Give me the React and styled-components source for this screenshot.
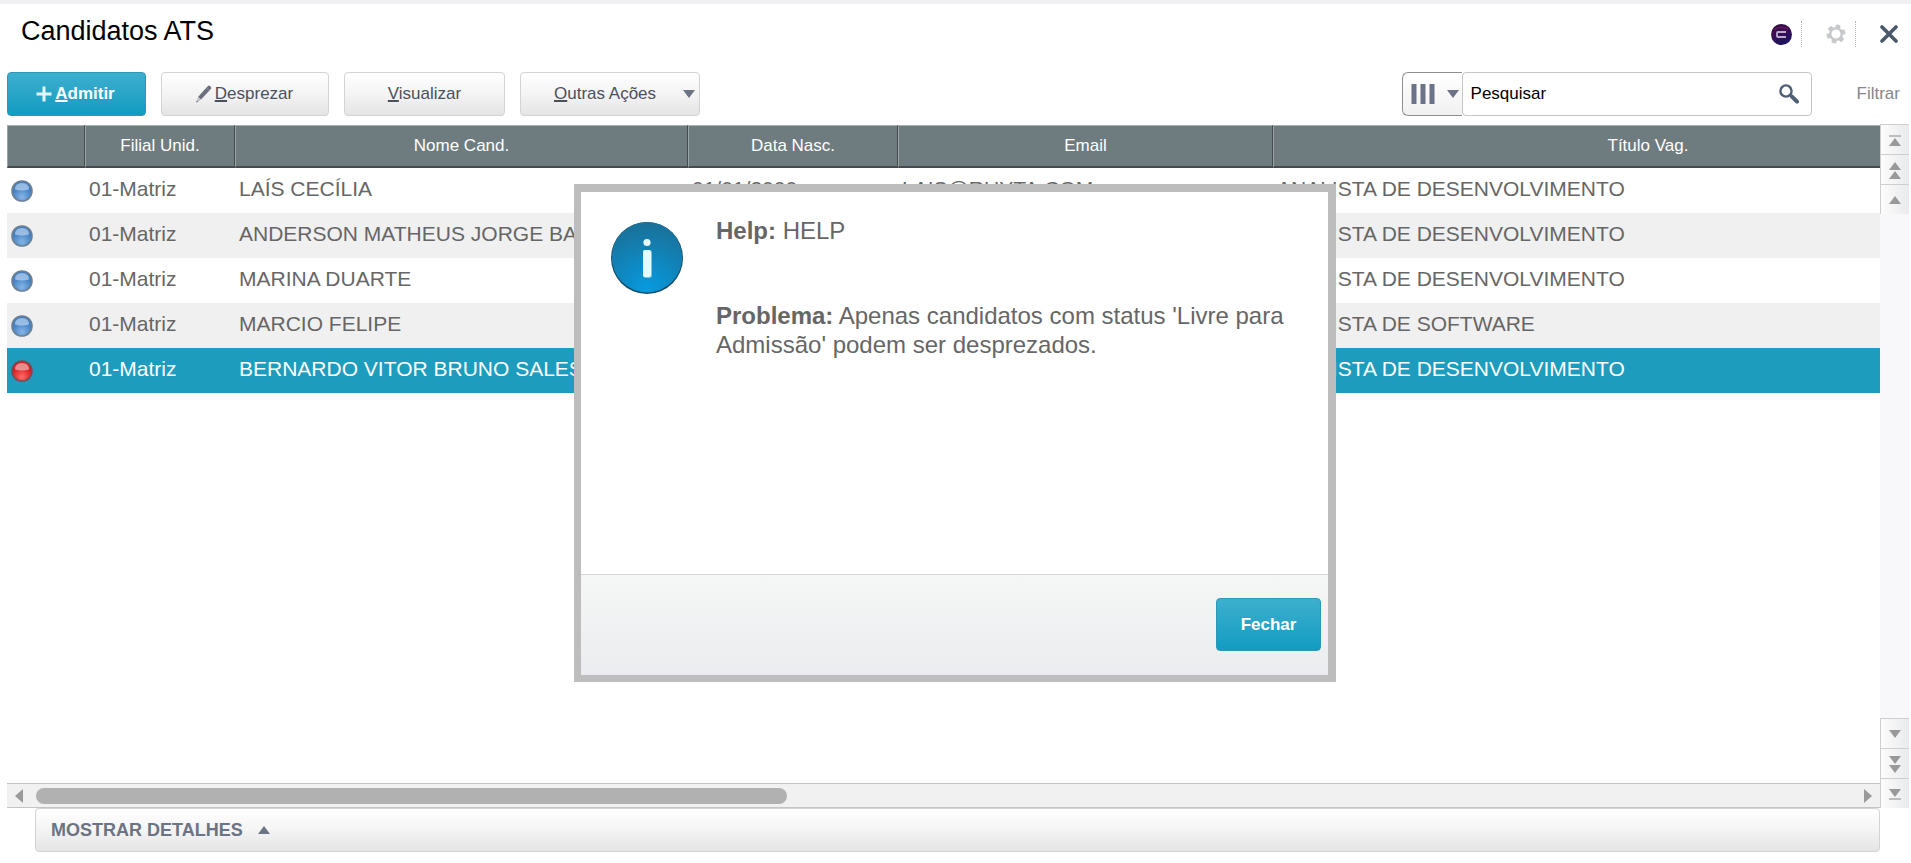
import { useState } from 'react';
import styled, { createGlobalStyle, css } from 'styled-components';

const columns = [
  { id: 'status', title: '', width: 78 },
  { id: 'filial', title: 'Filial Unid.', width: 150 },
  { id: 'nome', title: 'Nome Cand.', width: 453 },
  { id: 'nasc', title: 'Data Nasc.', width: 210 },
  { id: 'email', title: 'Email', width: 375 },
  { id: 'vaga', title: 'Título Vag.', width: 750 },
];

const candidates = [
  {
    id: 1,
    status: 'blue',
    filial: '01-Matriz',
    nome: 'LAÍS CECÍLIA',
    nasc: '01/01/2000',
    email: 'LAIS@RUYTA.COM',
    vaga: 'ANALISTA DE DESENVOLVIMENTO',
  },
  { id: 2, status: 'blue', filial: '01-Matriz', nome: 'ANDERSON MATHEUS JORGE BA', vaga: 'ANALISTA DE DESENVOLVIMENTO' },
  { id: 3, status: 'blue', filial: '01-Matriz', nome: 'MARINA DUARTE', vaga: 'ANALISTA DE DESENVOLVIMENTO' },
  { id: 4, status: 'blue', filial: '01-Matriz', nome: 'MARCIO FELIPE', vaga: 'ANALISTA DE SOFTWARE' },
  { id: 5, status: 'red', filial: '01-Matriz', nome: 'BERNARDO VITOR BRUNO SALES', vaga: 'ANALISTA DE DESENVOLVIMENTO' },
];

const ledColors = {
  blue: { edge: '#6d7f90', base: '#3f7fc4', glow: '#86b4e4', shine: '#b4cfec' },
  red: { edge: '#7c4a55', base: '#d81c20', glow: '#ff6a66', shine: '#eeb0b0' },
};

const Led = ({ color }) => {
  const c = ledColors[color];
  return (
    <svg width='22' height='22' viewBox='0 0 22 22' aria-label={color} role='img'>
      <defs>
        <radialGradient id={`led-${color}`} cx='0.5' cy='0.8' r='0.7'>
          <stop offset='0' stopColor={c.glow} />
          <stop offset='0.75' stopColor={c.base} />
        </radialGradient>
      </defs>
      <circle cx='11' cy='11' r='10' fill={`url(#led-${color})`} stroke={c.edge} strokeWidth='1.6' />
      <path d='M4 9.5 Q4 3 11 3 Q18 3 18 9.5 Q11 11.5 4 9.5Z' fill={c.shine} opacity='0.75' />
    </svg>
  );
};

const Triangle = ({ dir = 'down', color = '#6b7384', width = 12, height = 8 }) => {
  const points = {
    down: `0,0 ${width},0 ${width / 2},${height}`,
    up: `0,${height} ${width},${height} ${width / 2},0`,
    left: `${width},0 ${width},${height} 0,${height / 2}`,
    right: `0,0 0,${height} ${width},${height / 2}`,
  };
  return (
    <svg width={width} height={height} aria-hidden='true'>
      <polygon points={points[dir]} fill={color} />
    </svg>
  );
};

const PlusIcon = () => (
  <svg width='16' height='16' viewBox='0 0 16 16' aria-hidden='true'>
    <path d='M8 0.5v15M0.5 8h15' stroke='#e4f8fc' strokeWidth='3' />
  </svg>
);

const PencilIcon = () => (
  <svg width='17' height='18' viewBox='0 0 17 18' aria-hidden='true'>
    <path d='M3 12L11.5 2.5L14.5 5.5L6 14.5Z' fill='#6b6f7e' />
    <path d='M11.5 2.5L13.5 0.6Q16 0.6 16.4 3.2L14.5 5.5Z' fill='#6b6f7e' />
    <path d='M3 12L6 14.5L1.5 17.5Z' fill='#b9bcc4' />
    <path d='M2 15.4L3.4 16.6L1 17.8Z' fill='#6b6f7e' />
  </svg>
);

const ColumnsIcon = () => (
  <svg width='24' height='20' viewBox='0 0 24 20' aria-hidden='true'>
    <path d='M3 0v20M12 0v20M21 0v20' stroke='#6b7388' strokeWidth='5' />
  </svg>
);

const SearchIcon = () => (
  <svg width='20' height='20' viewBox='0 0 20 20' aria-hidden='true'>
    <circle cx='7' cy='7' r='5.6' fill='none' stroke='#4d5d73' strokeWidth='2.4' />
    <path d='M11 11l2 2' stroke='#4d5d73' strokeWidth='2.4' />
    <path d='M13 12.6l5 5' stroke='#4d5d73' strokeWidth='4' strokeLinecap='round' />
  </svg>
);

const CarolIcon = () => (
  <svg width='21' height='21' viewBox='0 0 21 21' aria-hidden='true'>
    <defs>
      <linearGradient id='carol' x1='0' y1='0' x2='0.4' y2='1'>
        <stop offset='0' stopColor='#2a0a38' />
        <stop offset='0.45' stopColor='#3d0d52' />
        <stop offset='1' stopColor='#1d1462' />
      </linearGradient>
    </defs>
    <circle cx='10.5' cy='10.5' r='10.5' fill='url(#carol)' />
    <path d='M3 6Q9 1 17 5' fill='none' stroke='#64185c' strokeWidth='2' opacity='0.8' />
    <path d='M15 8H7Q6 8 6 9V12Q6 13 7 13H15' fill='none' stroke='#b9a9cc' strokeWidth='1.8' />
  </svg>
);

const GearIcon = () => (
  <svg width='20' height='20' viewBox='-10 -10 20 20' aria-hidden='true'>
    <g fill='#c6c8cb'>
      {[15, 75, 135, 195, 255, 315].map((deg) => (
        <rect key={deg} x='-2.4' y='-9.4' width='4.8' height='4.6' rx='1' transform={`rotate(${deg})`} />
      ))}
    </g>
    <circle r='5.8' fill='none' stroke='#c6c8cb' strokeWidth='2.4' />
  </svg>
);

const CloseIcon = () => (
  <svg width='18' height='18' viewBox='0 0 18 18' aria-hidden='true'>
    <path d='M2 2l14 14M16 2L2 16' stroke='#4a586c' strokeWidth='3.6' strokeLinecap='round' />
  </svg>
);

const InfoIcon = () => (
  <svg width='72' height='72' viewBox='0 0 72 72' aria-hidden='true'>
    <defs>
      <radialGradient id='info' cx='0.5' cy='0.95' r='0.9'>
        <stop offset='0' stopColor='#069be0' />
        <stop offset='0.5' stopColor='#0f86bd' />
        <stop offset='1' stopColor='#19729b' />
      </radialGradient>
    </defs>
    <circle cx='36' cy='36' r='36' fill='#124a66' />
    <circle cx='36' cy='35.2' r='35.2' fill='url(#info)' />
    <circle cx='36' cy='20.5' r='3.6' fill='#e4fbff' />
    <rect x='32' y='28' width='9' height='28' rx='3' fill='#7cc4e2' />
    <rect x='32' y='28' width='8' height='27' rx='2' fill='#e4fbff' />
  </svg>
);

const App = () => {
  const [selected, setSelected] = useState(5);
  const [open, setOpen] = useState(true);

  return (
    <Page>
      <GlobalStyle />
      <TitleBar>
        <Title>Candidatos ATS</Title>
        <TitleActions>
          <IconButton aria-label='Carol'>
            <CarolIcon />
          </IconButton>
          <Divider />
          <IconButton aria-label='Configurações' $wide>
            <GearIcon />
          </IconButton>
          <Divider />
          <IconButton aria-label='Sair' $wide>
            <CloseIcon />
          </IconButton>
        </TitleActions>
      </TitleBar>

      <Toolbar>
        <Button $primary $width={139}>
          <PlusIcon />
          <Label>
            <u>A</u>dmitir
          </Label>
        </Button>
        <Button $width={168}>
          <PencilIcon />
          <Label>
            <u>D</u>esprezar
          </Label>
        </Button>
        <Button $width={161}>
          <Label>
            <u>V</u>isualizar
          </Label>
        </Button>
        <MenuButton $width={180} aria-haspopup='menu'>
          <Label>
            <u>O</u>utras Ações
          </Label>
          <Triangle />
        </MenuButton>
        <SearchGroup>
          <ColumnPicker aria-label='Colunas' aria-haspopup='menu'>
            <ColumnsIcon />
            <Triangle />
          </ColumnPicker>
          <SearchBox>
            <SearchInput type='text' placeholder='Pesquisar' aria-label='Pesquisar' />
            <IconButton aria-label='Buscar'>
              <SearchIcon />
            </IconButton>
          </SearchBox>
        </SearchGroup>
        <FilterButton>Filtrar</FilterButton>
      </Toolbar>

      <Browse>
        <BrowseMain>
          <TableView>
            <Table>
              <colgroup>
                {columns.map((col) => (
                  <Col key={col.id} $width={col.width} />
                ))}
              </colgroup>
              <thead>
                <tr>
                  {columns.map((col) => (
                    <HeadCell key={col.id} scope='col'>
                      {col.title}
                    </HeadCell>
                  ))}
                </tr>
              </thead>
              <tbody>
                {candidates.map((item) => (
                  <Row key={item.id} $selected={item.id === selected} onClick={() => setSelected(item.id)}>
                    <StatusCell>
                      <Led color={item.status} />
                    </StatusCell>
                    <Cell>{item.filial}</Cell>
                    <Cell>{item.nome}</Cell>
                    <Cell>{item.nasc}</Cell>
                    <Cell>{item.email}</Cell>
                    <Cell>{item.vaga}</Cell>
                  </Row>
                ))}
              </tbody>
            </Table>
          </TableView>
          <HScroll>
            <ArrowButton aria-label='Rolar para a esquerda'>
              <Triangle dir='left' color='#9a9a9a' width={8} height={14} />
            </ArrowButton>
            <Track>
              <Thumb />
            </Track>
            <ArrowButton aria-label='Rolar para a direita'>
              <Triangle dir='right' color='#9a9a9a' width={8} height={14} />
            </ArrowButton>
          </HScroll>
        </BrowseMain>
        <VScroll>
          <StepGroup>
            <StepButton aria-label='Primeiro'>
              <StepBar />
              <Triangle dir='up' color='#999' />
            </StepButton>
            <StepButton aria-label='Página anterior'>
              <Triangle dir='up' color='#999' />
              <Triangle dir='up' color='#999' />
            </StepButton>
            <StepButton aria-label='Linha anterior'>
              <Triangle dir='up' color='#999' />
            </StepButton>
          </StepGroup>
          <StepGroup>
            <StepButton aria-label='Próxima linha'>
              <Triangle color='#999' />
            </StepButton>
            <StepButton aria-label='Próxima página'>
              <Triangle color='#999' />
              <Triangle color='#999' />
            </StepButton>
            <StepButton aria-label='Último'>
              <Triangle color='#999' />
              <StepBar />
            </StepButton>
          </StepGroup>
        </VScroll>
      </Browse>

      <DetailsButton>
        MOSTRAR DETALHES
        <Triangle dir='up' />
      </DetailsButton>

      {open && (
        <Overlay>
          <Modal role='dialog' aria-modal='true' aria-labelledby='help-title'>
            <ModalBody>
              <InfoIcon />
              <Message>
                <p id='help-title'>
                  <b>Help:</b> HELP
                </p>
                <p>
                  <b>Problema:</b> Apenas candidatos com status 'Livre para Admissão' podem ser desprezados.
                </p>
              </Message>
            </ModalBody>
            <ModalFooter>
              <CloseButton $primary $width={105} onClick={() => setOpen(false)}>
                Fechar
              </CloseButton>
            </ModalFooter>
          </Modal>
        </Overlay>
      )}
    </Page>
  );
};

const GlobalStyle = createGlobalStyle`
  * {
    box-sizing: border-box;
  }
  body {
    margin: 0;
    background: #fff;
    font-family: 'Liberation Sans', Arial, sans-serif;
  }
  button, input {
    margin: 0;
    padding: 0;
    font-family: inherit;
  }
  svg {
    display: block;
    flex-shrink: 0;
  }
`;

const Page = styled.div`
  display: flex;
  flex-direction: column;
  min-height: 100vh;
  padding-bottom: 11px;
  border-top: 4px solid #f0f0f2;
`;

const TitleBar = styled.header`
  display: flex;
  justify-content: space-between;
  align-items: flex-start;
  height: 68px;
  padding: 11px 13px 0 21px;
`;

const Title = styled.h1`
  margin: 0;
  color: #000;
  font-size: 27px;
  font-weight: 400;
  line-height: 32px;
`;

const TitleActions = styled.div`
  display: flex;
  align-items: center;
  height: 38px;
`;

const Divider = styled.span`
  height: 26px;
  margin-left: 9px;
  border-left: 1px dotted #b4b4b4;
`;

const IconButton = styled.button`
  display: flex;
  border: none;
  background: none;
  cursor: pointer;
  margin-left: ${({ $wide }) => ($wide ? '24px' : '0')};
`;

const Toolbar = styled.div`
  display: flex;
  align-items: center;
  gap: 15px;
  padding: 0 11px 0 7px;
  margin-bottom: 8px;
`;

const Button = styled.button`
  display: flex;
  justify-content: center;
  align-items: center;
  gap: 3px;
  min-width: ${({ $width }) => $width}px;
  height: 44px;
  border: 1px solid #d3d3d3;
  border-radius: 4px;
  background: linear-gradient(#fff, #f4f4f4 50%, #e4e4e4);
  color: #4c505c;
  font-size: 17px;
  line-height: 20px;
  cursor: pointer;

  &:has(svg) {
    padding-right: 2px;
  }

  ${({ $primary }) =>
    $primary &&
    css`
      border-color: #2b98b5;
      background: linear-gradient(#3eafce, #119cc1);
      color: #fff;
      font-weight: 700;
    `}
`;

const Label = styled.span`
  u {
    text-decoration-thickness: 2px;
    text-underline-offset: 1px;
  }
`;

const MenuButton = styled(Button)`
  && {
    justify-content: space-between;
    padding: 0 4px 0 33px;
  }
`;

const SearchGroup = styled.div`
  display: flex;
  width: 410px;
  height: 44px;
  margin-left: auto;
`;

const ColumnPicker = styled.button`
  display: flex;
  justify-content: space-between;
  align-items: center;
  width: 60px;
  padding: 0 3px 0 8px;
  border: 1px solid #8f8f8f;
  border-right: none;
  border-radius: 6px 0 0 6px;
  background: linear-gradient(#fff, #f1f1f1);
  cursor: pointer;
`;

const SearchBox = styled.div`
  display: flex;
  flex: 1;
  align-items: center;
  padding: 0 12px 0 8px;
  border: 1px solid #c2c6c6;
  border-radius: 4px;
`;

const SearchInput = styled.input`
  flex: 1;
  min-width: 0;
  border: none;
  outline: none;
  background: none;
  color: #000;
  font-size: 17px;
  line-height: 20px;

  &::placeholder {
    color: #000;
    opacity: 1;
  }
`;

const FilterButton = styled.button`
  margin-left: 30px;
  border: none;
  background: none;
  color: #85888c;
  font-size: 17px;
  line-height: 20px;
  cursor: pointer;
`;

const Browse = styled.main`
  display: grid;
  grid-template-columns: minmax(0, 1fr) 29px;
  flex: 1;
  padding: 0 2px 0 7px;
`;

const BrowseMain = styled.div`
  display: flex;
  flex-direction: column;
  padding-top: 1px;
`;

const TableView = styled.div`
  flex: 1;
  overflow: hidden;
`;

const Table = styled.table`
  width: 100%;
  min-width: 2016px;
  table-layout: fixed;
  border-collapse: separate;
  border-spacing: 0;
`;

const Col = styled.col`
  width: ${({ $width }) => $width}px;
`;

const HeadCell = styled.th`
  height: 43px;
  padding: 0;
  border-top: 1px solid #a7b3b4;
  border-right: 1px solid #464b4e;
  border-bottom: 2px solid #474b4d;
  border-left: 1px solid #9aa5a8;
  background: #6e7c80;
  color: #fff;
  font-size: 17px;
  font-weight: 400;
  line-height: 20px;
  text-align: center;
`;

const Row = styled.tr`
  color: #666;
  background: #fff;

  &:nth-child(even) {
    background: #f0f0f0;
  }

  ${({ $selected }) =>
    $selected &&
    css`
      && {
        background: #1d9cbe;
        color: #fff;
      }
    `}
`;

const Cell = styled.td`
  height: 45px;
  padding: 0 4px 3px;
  overflow: hidden;
  font-size: 21px;
  line-height: 24px;
  white-space: nowrap;
`;

const StatusCell = styled(Cell)`
  padding: 1px 4px 0;
`;

const HScroll = styled.div`
  display: flex;
  align-items: center;
  height: 25px;
  border-top: 1px solid #c4c4c4;
  border-bottom: 1px solid #c4c4c4;
  background: #f1f1f1;
`;

const ArrowButton = styled.button`
  display: flex;
  padding: 0 8px;
  border: none;
  background: none;
  cursor: pointer;
`;

const Track = styled.div`
  flex: 1;
  padding-left: 5px;
`;

const Thumb = styled.div`
  width: calc(41% + 5px);
  height: 16px;
  border-radius: 8px;
  background: #b1b1b1;
`;

const VScroll = styled.div`
  display: flex;
  flex-direction: column;
  justify-content: space-between;
  background: #f8f8fb;
`;

const StepGroup = styled.div`
  display: flex;
  flex-direction: column;
`;

const StepButton = styled.button`
  display: flex;
  flex-direction: column;
  justify-content: center;
  align-items: center;
  gap: 1px;
  height: 30px;
  padding-top: 1px;
  border: 1px solid #cecece;
  border-width: 1px 0 0 1px;
  background: linear-gradient(to right, #fcfcfc, #e9eaec);
  cursor: pointer;
`;

const StepBar = styled.span`
  width: 12px;
  height: 2px;
  background: #bdbdbd;
`;

const DetailsButton = styled.button`
  display: flex;
  align-items: center;
  gap: 15px;
  height: 44px;
  margin: 0 31px 0 35px;
  padding: 0 15px;
  border: 1px solid #d3d3d3;
  border-radius: 4px;
  background: linear-gradient(#fff, #f4f4f4 50%, #e4e4e4);
  color: #6b7384;
  font-size: 18px;
  font-weight: 700;
  line-height: 20px;
  cursor: pointer;
`;

const Overlay = styled.div`
  position: fixed;
  inset: 0;
  display: flex;
  justify-content: center;
  align-items: center;
  padding: 3px 1px 0 0;
`;

const Modal = styled.section`
  display: flex;
  flex-direction: column;
  width: 762px;
  min-height: 498px;
  border: 8px solid #bdbdbd;
  border-width: 8px 8px 7px 7px;
  background: #fff;
`;

const ModalBody = styled.div`
  display: flex;
  flex: 1;
  align-items: flex-start;
  gap: 33px;
  padding: 30px 30px 0;
`;

const Message = styled.div`
  color: #666;
  font-size: 24px;
  line-height: 29px;

  p {
    margin: 0 0 56px;
  }
  p:first-child {
    margin-top: -6px;
  }
`;

const ModalFooter = styled.footer`
  display: flex;
  justify-content: flex-end;
  align-items: flex-start;
  height: 101px;
  padding: 23px 7px 0;
  border-top: 1px solid #d4d6d6;
  background: linear-gradient(#f5f7f6, #ebecef);
`;

const CloseButton = styled(Button)`
  height: 53px;
`;

export default App;
